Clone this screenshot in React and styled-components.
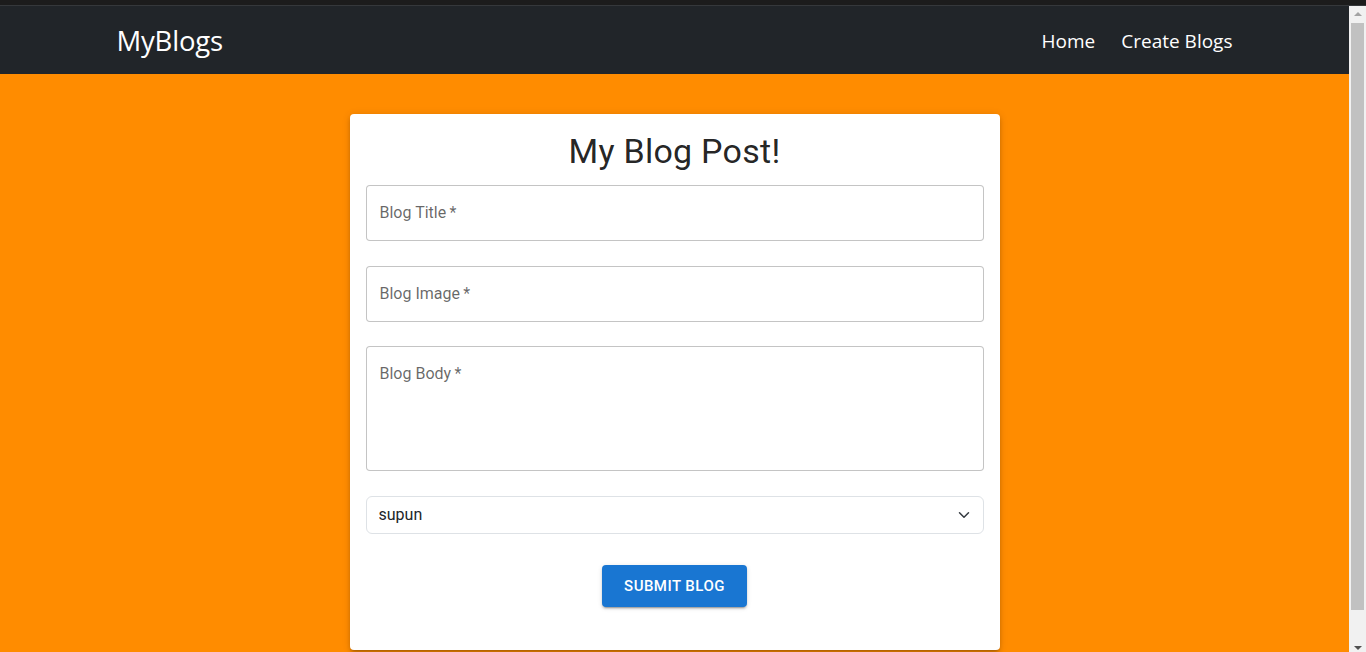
import React from 'react';
import styled, { createGlobalStyle } from 'styled-components';

const GlobalStyle = createGlobalStyle`
  html, body {
    margin: 0;
    padding: 0;
    height: 100%;
    overflow: hidden;
    background: #1d1d1d;
  }
  * {
    box-sizing: border-box;
  }
`;

const App = () => {
  return (
    <>
      <GlobalStyle />
      <WindowTop />
      <Window>
        <Viewport>
          <Navbar>
            <NavContainer>
              <Brand href="#">MyBlogs</Brand>
              <NavLinks>
                <NavLink href="#">Home</NavLink>
                <NavLink href="#">Create Blogs</NavLink>
              </NavLinks>
            </NavContainer>
          </Navbar>

          <Main>
            <Card>
              <Title>My Blog Post!</Title>
              <Form onSubmit={(e) => e.preventDefault()}>
                <Fields>
                  <TextInput placeholder={'Blog Title\u2009*'} />
                  <TextInput placeholder={'Blog Image\u2009*'} />
                  <TextArea rows={4} placeholder={'Blog Body\u2009*'} />
                </Fields>
                <SelectWrap>
                  <Select defaultValue="supun">
                    <option value="supun">supun</option>
                  </Select>
                  <Chevron viewBox="0 0 16 16" fill="none">
                    <path
                      d="m2 5 6 6 6-6"
                      stroke="#343a40"
                      strokeWidth="2"
                      strokeLinecap="round"
                      strokeLinejoin="round"
                    />
                  </Chevron>
                </SelectWrap>
                <ButtonRow>
                  <SubmitButton type="submit">Submit Blog</SubmitButton>
                </ButtonRow>
              </Form>
            </Card>
          </Main>
        </Viewport>

        {/* the page's scrollbar, as the browser drew it */}
        <ScrollBar>
          <ArrowButton>
            <Arrow dir="up" />
          </ArrowButton>
          <Track>
            <Thumb />
          </Track>
          <ArrowButton $bottom>
            <Arrow dir="down" />
          </ArrowButton>
        </ScrollBar>
      </Window>
    </>
  );
};

export default App;

// browser chrome above the page
const WindowTop = styled.div`
  height: 6px;
  background: #1c1c1c;
  border-bottom: 1px solid #35383b;
`;

const Window = styled.div`
  height: calc(100vh - 6px);
  display: flex;
`;

const Viewport = styled.div`
  flex: 1;
  overflow: hidden;
  background: #ff8c00;
`;

const ScrollBar = styled.div`
  width: 17px;
  flex-shrink: 0;
  display: flex;
  flex-direction: column;
  background: #f1f1f1;
`;

const ArrowButton = styled.div`
  height: 17px;
  display: flex;
  justify-content: center;
  align-items: flex-start;
  padding-top: ${(p) => (p.$bottom ? '11px' : '6px')};
`;

const Arrow = styled.div`
  width: 0;
  height: 0;
  border-left: 4px solid transparent;
  border-right: 4px solid transparent;
  ${(p) =>
    p.dir === 'up'
      ? 'border-bottom: 4px solid #a3a3a3;'
      : 'border-top: 4px solid #505050;'}
`;

const Track = styled.div`
  flex: 1;
  padding: 0 2px;
`;

const Thumb = styled.div`
  height: 587px;
  background: #c1c1c1;
`;

const Navbar = styled.nav`
  height: 68px;
  background-color: #212529;
  display: flex;
  align-items: center;
`;

const NavContainer = styled.div`
  width: 1140px;
  margin: 0 auto;
  padding: 0 12px;
  display: flex;
  align-items: center;
  justify-content: space-between;
`;

const Brand = styled.a`
  font-family: 'Open Sans', 'Noto Sans', sans-serif;
  font-size: 27.5px;
  color: #fff;
  text-decoration: none;
  letter-spacing: -0.2px;
  line-height: 1.2;
`;

const NavLinks = styled.div`
  display: flex;
  align-items: center;
  gap: 26px;
  padding-top: 2px;
`;

const NavLink = styled.a`
  font-family: 'Open Sans', 'Noto Sans', sans-serif;
  font-size: 19px;
  color: #fff;
  text-decoration: none;
  line-height: 1.2;
`;

const Main = styled.main`
  background-color: #ff8c00;
  padding: 40px 0 29px;
`;

const Card = styled.div`
  width: 650px;
  margin: 0 auto;
  background: #fff;
  border-radius: 4px;
  padding: 16px 16px 43px;
  box-shadow: 0px 3px 3px -2px rgba(0, 0, 0, 0.2),
    0px 3px 4px 0px rgba(0, 0, 0, 0.14), 0px 1px 8px 0px rgba(0, 0, 0, 0.12);
`;

const Title = styled.h4`
  margin: 0 0 13px;
  font-family: Roboto, 'Liberation Sans', sans-serif;
  font-weight: 400;
  font-size: 34px;
  line-height: 42px;
  letter-spacing: 0.25px;
  text-align: center;
  color: rgba(0, 0, 0, 0.87);
`;

const Form = styled.form`
  display: flex;
  flex-direction: column;
`;

const Fields = styled.div`
  display: flex;
  flex-direction: column;
  gap: 24.5px;
`;

const fieldStyles = `
  width: 100%;
  margin: 0;
  border: 1px solid rgba(0, 0, 0, 0.23);
  border-radius: 4px;
  padding: 16px 13px 17px;
  font-family: Roboto, 'Liberation Sans', sans-serif;
  font-size: 16px;
  line-height: 23px;
  color: rgba(0, 0, 0, 0.87);
  background: #fff;
  outline: none;
  &::placeholder {
    color: rgba(0, 0, 0, 0.6);
    opacity: 1;
  }
`;

const TextInput = styled.input`
  ${fieldStyles}
  height: 56px;
  display: block;
`;

const TextArea = styled.textarea`
  ${fieldStyles}
  display: block;
  height: 125px;
  padding-top: 15px;
  resize: none;
`;

const SelectWrap = styled.div`
  position: relative;
  margin-top: 25px;
`;

const Select = styled.select`
  display: block;
  width: 100%;
  height: 38px;
  appearance: none;
  border: 1px solid #dee2e6;
  border-radius: 6px;
  padding: 6px 36px 6px 12px;
  font-family: Roboto, 'Liberation Sans', sans-serif;
  font-size: 16px;
  line-height: 24px;
  color: #212529;
  background: #fff;
  outline: none;
`;

const Chevron = styled.svg`
  position: absolute;
  right: 12px;
  top: 13px;
  width: 16px;
  height: 12px;
  pointer-events: none;
`;

const ButtonRow = styled.div`
  display: flex;
  justify-content: center;
  margin-top: 31px;
`;

const SubmitButton = styled.button`
  background-color: #1976d2;
  color: #fff;
  border: none;
  border-radius: 4px;
  padding: 8px 22px;
  font-family: Roboto, 'Liberation Sans', sans-serif;
  font-weight: 500;
  font-size: 15px;
  line-height: 26.25px;
  letter-spacing: 0.46px;
  text-transform: uppercase;
  cursor: pointer;
  box-shadow: 0px 3px 1px -2px rgba(0, 0, 0, 0.2),
    0px 2px 2px 0px rgba(0, 0, 0, 0.14), 0px 1px 5px 0px rgba(0, 0, 0, 0.12);
  &:hover {
    background-color: #1565c0;
  }
`;
